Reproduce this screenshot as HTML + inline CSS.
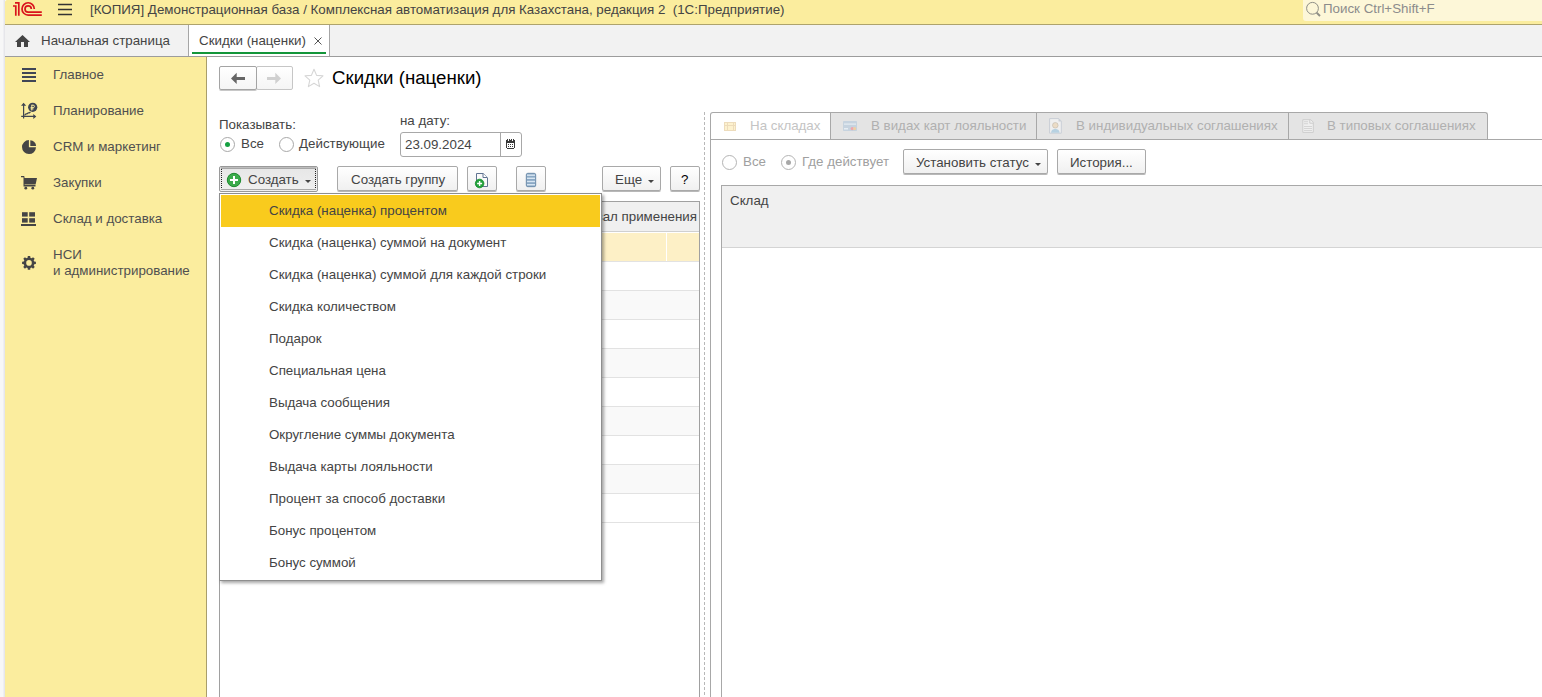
<!DOCTYPE html>
<html><head><meta charset="utf-8">
<style>
*{margin:0;padding:0;box-sizing:border-box}
html,body{width:1542px;height:697px;overflow:hidden;background:#fff;font-family:"Liberation Sans",sans-serif;font-size:13.33px;line-height:16px;color:#444}
div,span,svg{position:absolute}
.t{white-space:nowrap;height:16px}
.btn{background:linear-gradient(#ffffff,#f0f0f0);border:1px solid #a9a9a9;border-radius:2px;box-shadow:0 1px 0 #b8b8b8}
.menu .t{left:50px}
</style></head><body>
<!-- left strip + top bar -->
<div style="left:0;top:0;width:5px;height:697px;background:linear-gradient(90deg,#f7f7f7 0 3px,#efeff2 3px 4px,#e6e6ea 4px 5px)"></div>
<div style="left:5px;top:0;width:1537px;height:25px;background:#fbed9e;border-bottom:1px solid #aea36c;border-top-left-radius:2px"></div>
<svg style="left:12px;top:1px" width="32" height="17" viewBox="12 1 32 17">
 <g fill="none" stroke="#d9141c" stroke-width="1.7">
  <path d="M13 6H15.8V15.8"/>
  <path d="M15 2.8H18.8V15.8"/>
  <path d="M34.3 8.9A6.15 6.15 0 1 0 28.15 15.05H41.8"/>
  <path d="M31.3 8.95A3.15 3.15 0 1 0 28.15 12.1H41.8"/>
 </g>
</svg>
<svg style="left:56px;top:2px" width="18" height="16" viewBox="56 2 18 16">
 <g stroke="#333" stroke-width="1.3"><path d="M58 4.5H72M58 9.5H72M58 14.5H72"/></g>
</svg>
<div class="t" style="left:90px;top:2px">[КОПИЯ] Демонстрационная база / Комплексная автоматизация для Казахстана, редакция 2&nbsp; (1С:Предприятие)</div>
<div style="left:1303px;top:0;width:239px;height:21px;background:#fdf7d8;border-bottom-left-radius:3px"></div>
<svg style="left:1304px;top:1px" width="18" height="18" viewBox="1304 1 18 18"><circle cx="1312.5" cy="8.3" r="5.9" fill="none" stroke="#8e8e86" stroke-width="1"/><path d="M1316.6 12.6L1320 16" stroke="#8e8e86" stroke-width="2"/></svg>
<div class="t" style="left:1323px;top:1px;color:#8c8c8c">Поиск Ctrl+Shift+F</div>

<!-- tab bar -->
<div style="left:5px;top:25px;width:1537px;height:32px;background:#f2f2f2;border-bottom:1px solid #9c9c9c"></div>
<svg style="left:14px;top:34px" width="17" height="14" viewBox="14 34 17 14"><path d="M15 42L22.5 35L30 42H28V47H24V42H21V47H17V42Z" fill="#444"/></svg>
<div class="t" style="left:41px;top:33px">Начальная страница</div>
<div style="left:188px;top:25px;width:142px;height:31px;background:#fff;border-left:1px solid #a6a6a6;border-right:1px solid #a6a6a6"></div>
<div class="t" style="left:199px;top:33px">Скидки (наценки)</div>
<svg style="left:313px;top:35px" width="10" height="10" viewBox="0 0 10 10"><path d="M1.5 2.5L8.5 9.5M8.5 2.5L1.5 9.5" stroke="#555" stroke-width="1"/></svg>
<div style="left:192px;top:52px;width:134px;height:2px;background:#14963a"></div>

<!-- sidebar -->
<div style="left:5px;top:57px;width:202px;height:640px;background:#fbed9e;border-right:1px solid #a99e6b"></div>
<svg style="left:20px;top:66px" width="18" height="18" viewBox="20 66 18 18"><g fill="#404656"><rect x="22" y="68" width="14" height="2"/><rect x="22" y="72" width="14" height="2"/><rect x="22" y="76" width="14" height="2"/><rect x="22" y="80" width="14" height="2"/></g></svg>
<svg style="left:20px;top:100px" width="20" height="20" viewBox="20 100 20 20"><g fill="none" stroke="#3f4550" stroke-width="1.2"><path d="M23.6 104.5V118.5M21.2 116.4H34.5"/><path d="M24.5 115.3L26 113.8H27L28.3 112.8H29.3L30.5 112"/></g><path d="M23.6 102.8L21 105.8H26.2Z M36.3 116.4L33.3 113.9V118.9Z" fill="#3f4550"/><circle cx="32.7" cy="107.3" r="4.6" fill="#3f4550"/><path d="M31.8 104.8V110.5M31.8 105.2H33.2A1.2 1.2 0 0 1 33.2 107.6H30.6M30.6 108.9H33.5" stroke="#fbed9e" stroke-width="1" fill="none"/></svg>
<svg style="left:20px;top:138px" width="18" height="18" viewBox="20 138 18 18"><path d="M28.9 140.1A7 7 0 1 0 36 147.3H28.9Z" fill="#454545"/><path d="M30.3 140.2A5.9 5.9 0 0 1 36.1 145.9H30.3Z" fill="#454545"/></svg>
<svg style="left:20px;top:174px" width="18" height="18" viewBox="20 174 18 18"><g fill="#454545"><path d="M21 176H24.2L24.6 178H37L35.6 184.4H24.6V185H35.5V186.5H23.5V177.3H21Z"/><circle cx="25.8" cy="188.2" r="1.4"/><circle cx="32.8" cy="188.2" r="1.4"/></g></svg>
<svg style="left:20px;top:210px" width="18" height="18" viewBox="20 210 18 18"><g fill="#454545"><rect x="22" y="212.2" width="5.7" height="4.4"/><rect x="29.2" y="212.2" width="5.8" height="4.4"/><rect x="22" y="218.2" width="5.7" height="4.4"/><rect x="29.2" y="218.2" width="5.8" height="4.4"/><rect x="21" y="224" width="15" height="2"/></g></svg>
<svg style="left:20px;top:254px" width="18" height="18" viewBox="20 254 18 18"><path fill-rule="evenodd" fill="#454545" d="M27.62 257.68L27.80 256.00L30.20 256.00L30.38 257.68A5.4 5.4 0 0 1 31.72 258.23L33.03 257.17L34.73 258.87L33.67 260.18A5.4 5.4 0 0 1 34.22 261.52L35.90 261.70L35.90 264.10L34.22 264.28A5.4 5.4 0 0 1 33.67 265.62L34.73 266.93L33.03 268.63L31.72 267.57A5.4 5.4 0 0 1 30.38 268.12L30.20 269.80L27.80 269.80L27.62 268.12A5.4 5.4 0 0 1 26.28 267.57L24.97 268.63L23.27 266.93L24.33 265.62A5.4 5.4 0 0 1 23.78 264.28L22.10 264.10L22.10 261.70L23.78 261.52A5.4 5.4 0 0 1 24.33 260.18L23.27 258.87L24.97 257.17L26.28 258.23A5.4 5.4 0 0 1 27.62 257.68ZM29 260.09999999999997A2.8 2.8 0 1 0 29 265.7A2.8 2.8 0 1 0 29 260.09999999999997Z"/></svg>
<div class="t" style="left:53px;top:67px;color:#505050">Главное</div>
<div class="t" style="left:53px;top:103px;color:#505050">Планирование</div>
<div class="t" style="left:53px;top:139px;color:#505050">CRM и маркетинг</div>
<div class="t" style="left:53px;top:175px;color:#505050">Закупки</div>
<div class="t" style="left:53px;top:211px;color:#505050">Склад и доставка</div>
<div class="t" style="left:53px;top:247px;color:#505050;height:32px">НСИ<br>и администрирование</div>

<!-- form header -->
<div style="left:256px;top:66px;width:37px;height:24px;border:1px solid #c6c6c6;border-radius:2px;background:linear-gradient(#ffffff,#f5f5f5)"></div>
<div style="left:219px;top:66px;width:38px;height:24px;border:1px solid #a4a4a4;border-radius:2px;background:linear-gradient(#ffffff,#f5f5f5);box-shadow:0 1px 0 #c8c8c8"></div>
<svg style="left:228px;top:70px" width="20" height="16" viewBox="228 70 20 16"><path d="M231 78.4L236.7 72.8V76.9H245V80H236.7V84Z" fill="#666"/></svg>
<svg style="left:264px;top:70px" width="20" height="16" viewBox="264 70 20 16"><path d="M281 78.4L275.3 72.8V76.9H267V80H275.3V84Z" fill="#d0d0d0"/></svg>
<svg style="left:302px;top:66px" width="24" height="24" viewBox="302 66 24 24"><path d="M314 69.3L316.6 75.4L323 75.8L318.2 80.1L319.6 86.6L314 83.3L308.4 86.6L309.8 80.1L305 75.8L311.4 75.4Z" fill="none" stroke="#d6d6d6" stroke-width="1.1" stroke-linejoin="round"/></svg>
<div class="t" style="left:332px;top:67px;font-size:18.67px;line-height:22px;height:22px;color:#000">Скидки (наценки)</div>

<div class="t" style="left:219px;top:117px">Показывать:</div>
<div style="left:220px;top:137px;width:15px;height:15px;border:1px solid #a8a8a8;border-radius:50%"></div>
<div style="left:225px;top:142px;width:5px;height:5px;border-radius:50%;background:#16a042"></div>
<div class="t" style="left:241px;top:136px">Все</div>
<div style="left:279px;top:137px;width:15px;height:15px;border:1px solid #a8a8a8;border-radius:50%"></div>
<div class="t" style="left:299px;top:136px">Действующие</div>
<div class="t" style="left:400px;top:113px">на дату:</div>
<div style="left:400px;top:132px;width:122px;height:25px;border:1px solid #a8a8a8;border-radius:3px;background:#fff"></div>
<div style="left:500px;top:133px;width:1px;height:23px;background:#a8a8a8"></div>
<div class="t" style="left:405px;top:137px">23.09.2024</div>
<svg style="left:505px;top:137px" width="12" height="13" viewBox="505 137 12 13" shape-rendering="crispEdges"><rect x="506" y="140" width="9" height="9" fill="#3a3a3a"/><rect x="507" y="143" width="7" height="5" fill="#fff"/><g fill="#3a3a3a"><rect x="508" y="144" width="1" height="1"/><rect x="510" y="144" width="1" height="1"/><rect x="512" y="144" width="1" height="1"/><rect x="508" y="146" width="1" height="1"/><rect x="510" y="146" width="1" height="1"/><rect x="512" y="146" width="1" height="1"/><rect x="507" y="139" width="3" height="2"/><rect x="511" y="139" width="3" height="2"/></g><g fill="#fff"><rect x="508" y="139" width="1" height="2"/><rect x="512" y="139" width="1" height="2"/><rect x="506" y="148" width="1" height="1"/><rect x="514" y="148" width="1" height="1"/></g></svg>

<!-- toolbar -->
<div style="left:219px;top:166px;width:99px;height:26px;border:1px solid #9a9a9a;border-radius:2px;background:linear-gradient(#e6e6e6,#f0f0f0)"></div>
<div style="left:221px;top:167px;width:95px;height:2px;background:linear-gradient(#c8c8c8,#9c9c9c)"></div>
<div style="left:221px;top:169px;width:95px;height:19px;border-left:1px dotted #222;border-right:1px dotted #222"></div>
<div style="left:221px;top:189px;width:95px;height:1px;background:#a8a8a8"></div>
<svg style="left:226px;top:172px" width="16" height="16" viewBox="0 0 16 16"><circle cx="8" cy="8" r="6.7" fill="#3bab4b" stroke="#1d8a2e" stroke-width="1"/><path d="M8 4V12M4 8H12" stroke="#fff" stroke-width="2"/></svg>
<div class="t" style="left:248px;top:172px">Создать</div>
<svg style="left:304px;top:179px" width="8" height="5" viewBox="0 0 8 5"><path d="M1 1H7L4 4Z" fill="#444"/></svg>

<div class="btn" style="left:337px;top:166px;width:121px;height:25px"></div>
<div class="t" style="left:351px;top:172px">Создать группу</div>
<div class="btn" style="left:467px;top:166px;width:30px;height:25px"></div>
<svg style="left:470px;top:171px" width="22" height="20" viewBox="470 171 22 20"><path d="M476.5 173.5H483.2L487.5 177.8V186.5H476.5Z" fill="#fafafa" stroke="#5f7391" stroke-width="1"/><path d="M483 173.5V177.5H487.2" fill="#fff" stroke="#5f7391" stroke-width="1"/><circle cx="479.6" cy="183.5" r="4.3" fill="#22a33b" stroke="#128a2a" stroke-width="0.8"/><path d="M479.6 181V186M477.1 183.5H482.1" stroke="#fff" stroke-width="1.4"/></svg>
<div class="btn" style="left:516px;top:166px;width:30px;height:25px"></div>
<svg style="left:524px;top:171px" width="14" height="18" viewBox="524 171 14 18"><rect x="526.3" y="173.3" width="9.4" height="13.4" rx="1.5" fill="#8aa8c4" stroke="#5d7fa0" stroke-width="0.8"/><g fill="#d7e5f2"><rect x="527" y="174.5" width="8" height="1.4"/><rect x="527" y="177.6" width="8" height="1.4"/><rect x="527" y="180.8" width="8" height="1.4"/><rect x="527" y="184" width="8" height="1.4"/></g></svg>
<div class="btn" style="left:602px;top:166px;width:59px;height:25px"></div>
<div class="t" style="left:615px;top:172px">Еще</div>
<svg style="left:647px;top:179px" width="8" height="5" viewBox="0 0 8 5"><path d="M1 1H7L4 4Z" fill="#444"/></svg>
<div class="btn" style="left:670px;top:166px;width:30px;height:25px"></div>
<div class="t" style="left:681px;top:172px;color:#000">?</div>

<!-- left table -->
<div style="left:219px;top:201px;width:481px;height:496px;border:1px solid #a0a0a0;border-bottom:none;background:#fff"></div>
<div style="left:220px;top:202px;width:479px;height:30px;background:#f0f0f0;border-bottom:1px solid #d0d0d0"></div>
<div class="t" style="left:520px;top:209px;width:177px;text-align:right;overflow:hidden">Интервал применения</div>
<div style="left:220px;top:233px;width:479px;height:28px;background:#fdf0c6"></div>
<div style="left:666px;top:233px;width:1px;height:28px;background:#fff"></div>
<div style="left:220px;top:261px;width:479px;height:1px;background:#e2e2e2"></div>
<div style="left:220px;top:291px;width:479px;height:28px;background:#f9f9f9"></div>
<div style="left:220px;top:290px;width:479px;height:1px;background:#e2e2e2"></div>
<div style="left:220px;top:319px;width:479px;height:1px;background:#e2e2e2"></div>
<div style="left:220px;top:349px;width:479px;height:28px;background:#f9f9f9"></div>
<div style="left:220px;top:348px;width:479px;height:1px;background:#e2e2e2"></div>
<div style="left:220px;top:377px;width:479px;height:1px;background:#e2e2e2"></div>
<div style="left:220px;top:407px;width:479px;height:28px;background:#f9f9f9"></div>
<div style="left:220px;top:406px;width:479px;height:1px;background:#e2e2e2"></div>
<div style="left:220px;top:435px;width:479px;height:1px;background:#e2e2e2"></div>
<div style="left:220px;top:465px;width:479px;height:28px;background:#f9f9f9"></div>
<div style="left:220px;top:464px;width:479px;height:1px;background:#e2e2e2"></div>
<div style="left:220px;top:493px;width:479px;height:1px;background:#e2e2e2"></div>
<div style="left:220px;top:522px;width:479px;height:1px;background:#e2e2e2"></div>

<!-- splitter -->
<div style="left:704px;top:112px;width:1px;height:585px;background:repeating-linear-gradient(#b8b8b8 0 3px,transparent 3px 5px)"></div>

<!-- right tabs -->
<div style="left:710px;top:112px;width:121px;height:27px;border:1px solid #a8a8a8;border-bottom:none;border-top-left-radius:3px;background:#fff"></div>
<div style="left:830px;top:112px;width:207px;height:27px;border:1px solid #a8a8a8;border-bottom:none;background:#e4e4e4"></div>
<div style="left:1036px;top:112px;width:253px;height:27px;border:1px solid #a8a8a8;border-bottom:none;background:#e4e4e4"></div>
<div style="left:1288px;top:112px;width:200px;height:27px;border:1px solid #a8a8a8;border-bottom:none;border-top-right-radius:3px;background:#e4e4e4"></div>
<div style="left:710px;top:139px;width:832px;height:558px;border-left:1px solid #a8a8a8;border-top:1px solid #a8a8a8"></div>
<svg style="left:722px;top:120px" width="16" height="13" viewBox="722 120 16 13" shape-rendering="crispEdges"><rect x="724" y="122" width="12" height="9" fill="#fdf2cf"/><path d="M724.5 122.5H735.5V130.5H724.5Z M727.5 122.5V130.5M733.5 122.5V130.5M724.5 125.5H735.5" fill="none" stroke="#eddcbc" stroke-width="1"/></svg>
<div class="t" style="left:750px;top:118px;color:#c4c4c4">На складах</div>
<svg style="left:842px;top:120px" width="16" height="12" viewBox="842 120 16 12"><rect x="843" y="121" width="14" height="10" rx="0.8" fill="#c6d3df"/><rect x="844" y="123.5" width="12" height="1.2" fill="#e6edf3"/><rect x="844" y="128" width="4" height="1.5" fill="#e6edf3"/><circle cx="852.2" cy="128.6" r="1.6" fill="#eea6ae"/><circle cx="854.6" cy="128.6" r="1.6" fill="#efcfa2"/></svg>
<div class="t" style="left:871px;top:118px;color:#b0b0b0">В видах карт лояльности</div>
<svg style="left:1048px;top:117px" width="16" height="18" viewBox="1048 117 16 18"><path d="M1049.6 118.6H1058.8L1061.3 121.1V133.2H1049.6Z" fill="#f0f0f0" stroke="#c9ced6" stroke-width="1"/><path d="M1058.5 118.6V121.4H1061.3Z" fill="#c9ced6"/><circle cx="1055.3" cy="125.3" r="2.8" fill="#ebdcc6" stroke="#b8b0a4" stroke-width="0.5"/><path d="M1051 132.7C1051.3 129.6 1053 128.9 1055.3 128.9C1057.6 128.9 1059.3 129.6 1059.6 132.7Z" fill="#b7d1e1"/></svg>
<div class="t" style="left:1076px;top:118px;color:#b0b0b0">В индивидуальных соглашениях</div>
<svg style="left:1300px;top:117px" width="16" height="18" viewBox="1300 117 16 18"><path d="M1302.8 119.7H1310.8L1313.3 122.2V132.4H1302.8Z" fill="#efefef" stroke="#cdcdcd" stroke-width="1"/><path d="M1309.8 119.7V123.2H1313.3" fill="none" stroke="#cdcdcd" stroke-width="1"/><g fill="#d2d2d2"><rect x="1304" y="121.3" width="4" height="0.9"/><rect x="1304" y="123.3" width="4" height="0.9"/><rect x="1304" y="126" width="8" height="0.9"/><rect x="1304" y="128" width="8" height="0.9"/><rect x="1304" y="130" width="8" height="0.9"/></g></svg>
<div class="t" style="left:1327px;top:118px;color:#b0b0b0">В типовых соглашениях</div>

<div style="left:722px;top:155px;width:15px;height:15px;border:1px solid #b4b4b4;border-radius:50%"></div>
<div class="t" style="left:743px;top:154px;color:#a0a0a0">Все</div>
<div style="left:781px;top:155px;width:15px;height:15px;border:1px solid #b4b4b4;border-radius:50%"></div>
<div style="left:786px;top:160px;width:5px;height:5px;border-radius:50%;background:#a8a8a8"></div>
<div class="t" style="left:802px;top:154px;color:#a0a0a0">Где действует</div>
<div class="btn" style="left:903px;top:149px;width:145px;height:25px"></div>
<div class="t" style="left:916px;top:155px">Установить статус</div>
<svg style="left:1034px;top:162px" width="8" height="5" viewBox="0 0 8 5"><path d="M1 1H7L4 4Z" fill="#444"/></svg>
<div class="btn" style="left:1057px;top:149px;width:89px;height:25px"></div>
<div class="t" style="left:1070px;top:155px">История...</div>

<div style="left:721px;top:185px;width:821px;height:512px;border-left:1px solid #a8a8a8;border-top:1px solid #a8a8a8"></div>
<div style="left:722px;top:186px;width:820px;height:62px;background:#f0f0f0;border-bottom:1px solid #d4d4d4"></div>
<div class="t" style="left:730px;top:193px">Склад</div>

<!-- popup menu -->
<div style="left:219px;top:193px;width:383px;height:388px;background:#fff;border:1px solid #8e8e8e;box-shadow:2px 2px 3px rgba(0,0,0,.35)"></div>
<div style="left:221px;top:195px;width:379px;height:32px;background:#f9cb1d"></div>
<div class="menu" style="left:219px;top:0;width:383px;height:600px">
<div class="t" style="top:203px">Скидка (наценка) процентом</div>
<div class="t" style="top:235px">Скидка (наценка) суммой на документ</div>
<div class="t" style="top:267px">Скидка (наценка) суммой для каждой строки</div>
<div class="t" style="top:299px">Скидка количеством</div>
<div class="t" style="top:331px">Подарок</div>
<div class="t" style="top:363px">Специальная цена</div>
<div class="t" style="top:395px">Выдача сообщения</div>
<div class="t" style="top:427px">Округление суммы документа</div>
<div class="t" style="top:459px">Выдача карты лояльности</div>
<div class="t" style="top:491px">Процент за способ доставки</div>
<div class="t" style="top:523px">Бонус процентом</div>
<div class="t" style="top:555px">Бонус суммой</div>
</div>
</body></html>
